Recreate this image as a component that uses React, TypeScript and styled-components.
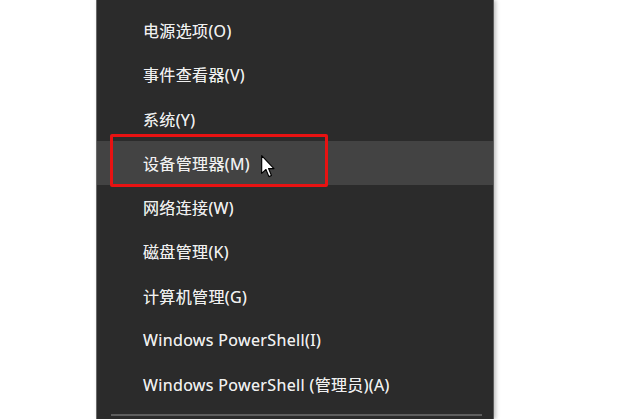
import React from "react";
import styled, { createGlobalStyle } from "styled-components";

const Global = createGlobalStyle`
  html, body { margin: 0; padding: 0; background: #ffffff; }
  body { width: 634px; height: 419px; overflow: hidden; }
`;

const Page = styled.div`
  width: 634px;
  height: 419px;
  background: #ffffff;
  display: flex;
  align-items: stretch;
  padding-left: 96px;
  box-sizing: border-box;
`;

const Menu = styled.div`
  width: 398px;
  height: 419px;
  box-sizing: border-box;
  background: #2b2b2b;
  border-left: 1px solid #6a6a6a;
  border-right: 1px solid #5c5c5c;
  box-shadow: 2px 0 4px rgba(0, 0, 0, 0.25);
  padding-top: 8px;
  display: flex;
  flex-direction: column;
`;

const Item = styled.div<{ $active?: boolean }>`
  position: relative;
  height: 44.25px;
  flex: 0 0 44.25px;
  display: flex;
  align-items: center;
  padding-left: 46px;
  background: ${(p) => (p.$active ? "#434343" : "transparent")};
  color: #f0f0f0;
  font-family: "Noto Sans", "Noto Sans CJK SC", sans-serif;
  font-size: 16px;
  letter-spacing: 0.35px;
  white-space: nowrap;
  text-shadow: 0 0 0.4px rgba(240, 240, 240, 0.6);
`;

const Highlight = styled.div`
  position: absolute;
  left: 13px;
  top: -7px;
  width: 218px;
  height: 53px;
  box-sizing: border-box;
  border: 3px solid #e81212;
  border-radius: 2px;
  pointer-events: none;
`;

const Cursor = styled.svg`
  position: absolute;
  left: 164px;
  top: 14px;
  width: 14px;
  height: 23px;
`;

const Separator = styled.div`
  margin: 8px 11px 0 14px;
  height: 2px;
  background: #5e5e5e;
`;

const items: { label: string; active?: boolean }[] = [
  { label: "电源选项(O)" },
  { label: "事件查看器(V)" },
  { label: "系统(Y)" },
  { label: "设备管理器(M)", active: true },
  { label: "网络连接(W)" },
  { label: "磁盘管理(K)" },
  { label: "计算机管理(G)" },
  { label: "Windows PowerShell(I)" },
  { label: "Windows PowerShell (管理员)(A)" },
];

export default function App() {
  return (
    <>
      <Global />
      <Page>
        <Menu>
          {items.map((it) => (
            <Item key={it.label} $active={it.active}>
              {it.label}
              {it.active && (
                <>
                  <Highlight />
                  <Cursor viewBox="0 0 12 20">
                    <path
                      d="M0.5 0.5 L0.5 16 L4.2 12.6 L6.8 18.8 L9 17.8 L6.5 11.8 L11.2 11.8 Z"
                      fill="#ffffff"
                      stroke="#000000"
                      strokeWidth="1"
                      strokeLinejoin="round"
                    />
                  </Cursor>
                </>
              )}
            </Item>
          ))}
          <Separator />
        </Menu>
      </Page>
    </>
  );
}
